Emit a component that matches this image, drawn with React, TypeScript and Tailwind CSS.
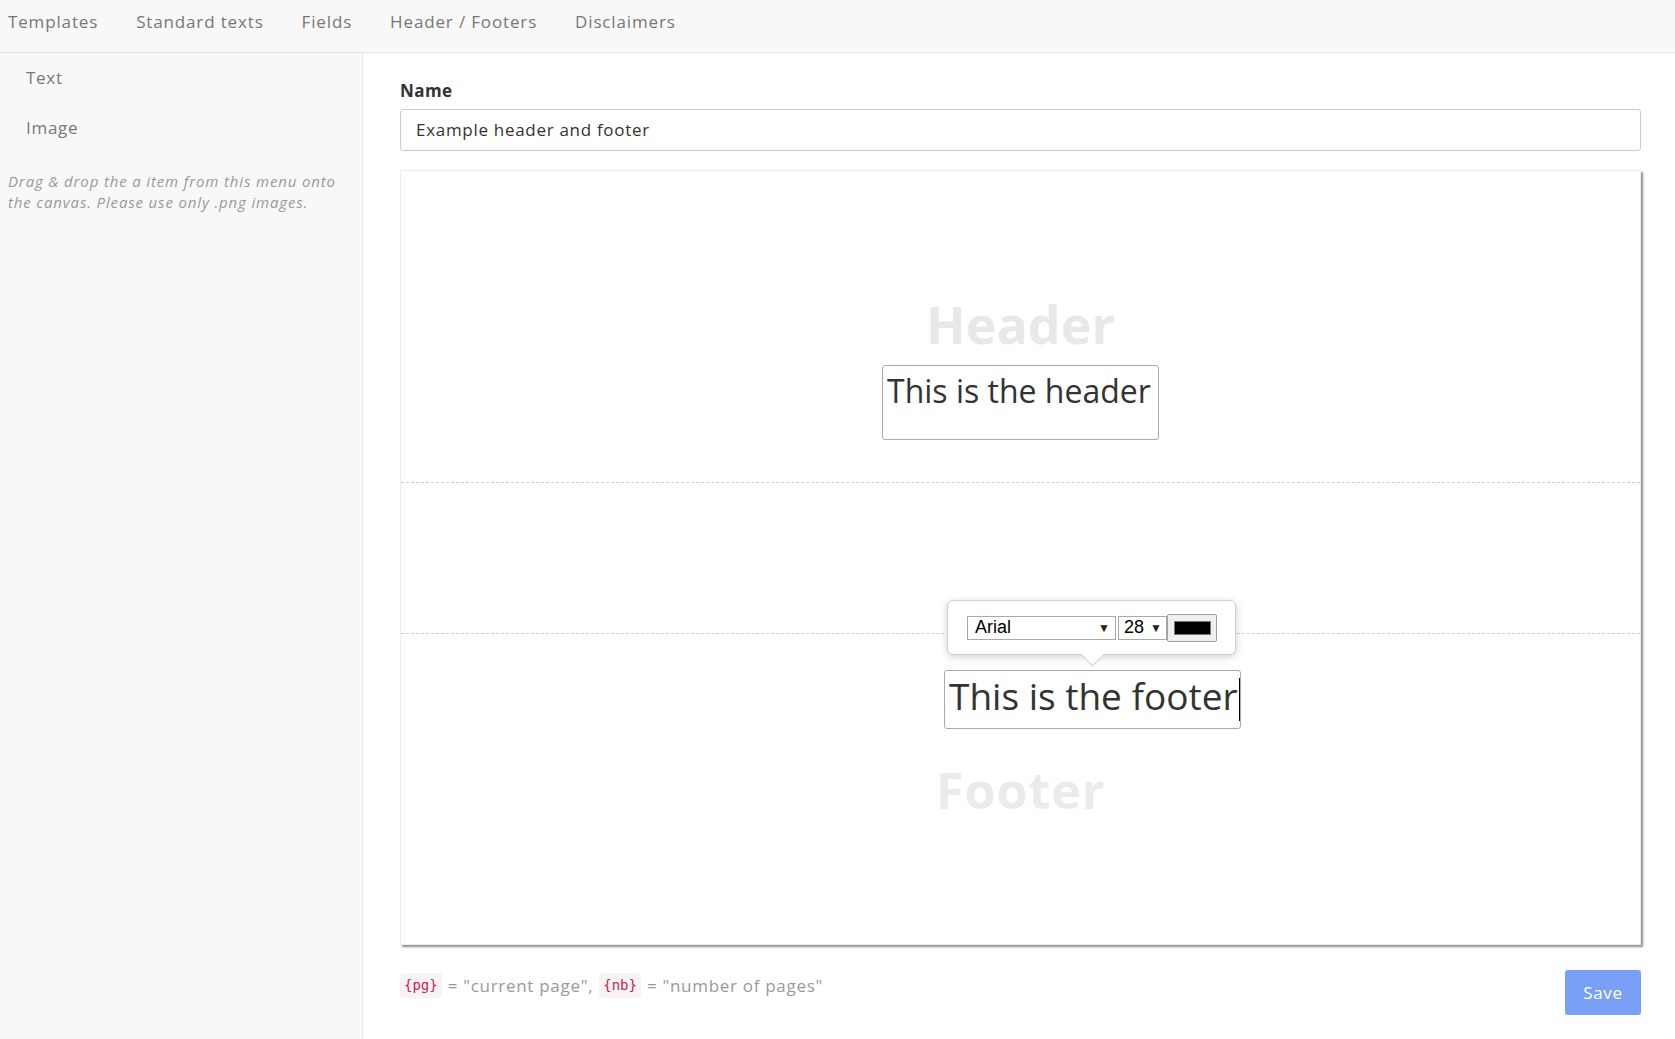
import React from "react";

const navItems = ["Templates", "Standard texts", "Fields", "Header / Footers", "Disclaimers"];

function Code({ children }: { children: React.ReactNode }) {
  return (
    <code className="rounded-[4px] bg-[#f9f2f4] px-[4px] py-[2px] text-[14px] tracking-normal text-[#c7254e] [font-family:'DejaVu_Sans_Mono',monospace]">
      {children}
    </code>
  );
}

function Caret() {
  return <span className="text-[12px] leading-none text-[#222]">▼</span>;
}

function Toolbar() {
  return (
    <div className="absolute left-[546px] top-[429px] flex h-[55px] w-[289px] items-center rounded-[6px] border border-[#cfcfcf] bg-white pl-[19px] shadow-[0_2px_8px_rgba(0,0,0,0.18)]">
      <div className="flex items-center tracking-normal [font-family:'Liberation_Sans',Arial,sans-serif]">
        <div className="flex h-[24px] w-[149px] items-center justify-between border border-[#a9a9a9] bg-white pl-[7px] pr-[5px] text-[18px] text-black">
          <span>Arial</span>
          <Caret />
        </div>
        <div className="ml-[2px] flex h-[24px] w-[49px] items-center justify-between border border-[#a9a9a9] bg-white pl-[5px] pr-[4px] text-[18px] text-black">
          <span>28</span>
          <Caret />
        </div>
        <div className="flex h-[28px] w-[50px] items-center justify-center rounded-[2px] border border-[#a0a0a0] bg-[#efefef]">
          <div className="h-[14px] w-[37px] border border-[#777] bg-black" />
        </div>
      </div>
      {/* arrow */}
      <div className="absolute left-[136px] top-[45px] h-[17px] w-[17px] rotate-45 border-b border-r border-[#cfcfcf] bg-white" />
    </div>
  );
}

function Canvas() {
  return (
    <div className="relative mt-[19px] flex h-[775px] flex-col border border-[#ececec] bg-white shadow-[2px_2px_2px_rgba(0,0,0,0.45)]">
      <div className="flex h-[312px] flex-col items-center border-b border-dashed border-[#cfcfcf] pt-[127px]">
        <span className="text-[52px] font-bold leading-none tracking-normal text-[#e8e8e8]">Header</span>
      </div>
      <div className="h-[151px] border-b border-dashed border-[#cfcfcf]" />
      <div className="flex flex-1 flex-col items-center pt-[130px]">
        <span className="text-[51px] font-bold leading-none tracking-[0.5px] text-[#ebebeb]">Footer</span>
      </div>

      <div className="absolute left-[481px] top-[194px] h-[75px] w-[277px] whitespace-nowrap rounded-[3px] border border-[#aaaaaa] bg-white px-[4px] pt-[1px] text-[32px] tracking-normal text-[#333]">
        This is the header
      </div>

      <Toolbar />

      <div className="absolute left-[543px] top-[499px] flex h-[59px] w-[297px] items-start overflow-hidden whitespace-nowrap rounded-[3px] border border-[#aaaaaa] bg-white pl-[4px] text-[37px] leading-[1.36] tracking-normal text-[#333]">
        <span>This is the footer</span>
        <span className="ml-[1px] mt-[7px] h-[43px] w-[1px] shrink-0 bg-black" />
      </div>
    </div>
  );
}

export default function App() {
  return (
    <div className="flex h-[1039px] flex-col bg-white tracking-[0.7px] text-[#333] [font-family:'Open_Sans',sans-serif]">
      <header className="flex h-[53px] shrink-0 items-center gap-[38px] border-b border-[#e6e6e6] bg-[#f8f8f8] pb-[8px] pl-[8px] text-[17px] tracking-[0.85px] text-[#777]">
        {navItems.map((item) => (
          <span key={item}>{item}</span>
        ))}
      </header>

      <div className="flex flex-1">
        <aside className="w-[363px] shrink-0 border-r border-[#e6e6e6] bg-[#f8f8f8]">
          <div className="pl-[26px] pt-[13px] text-[17px] text-[#777]">
            <div className="h-[24px] leading-[24px]">Text</div>
            <div className="mt-[26px] h-[24px] leading-[24px]">Image</div>
          </div>
          <p className="mt-[31px] whitespace-nowrap px-[8px] text-[15px] italic leading-[21px] tracking-[0.85px] text-[#999]">
            Drag &amp; drop the a item from this menu onto
            <br />
            the canvas. Please use only .png images.
          </p>
        </aside>

        <main className="flex flex-1 flex-col pl-[37px] pr-[34px] pt-[26px]">
          <label className="text-[17px] font-bold leading-[23px] tracking-[0.4px] text-[#333]">Name</label>
          <div className="mt-[7px] flex h-[42px] items-center rounded-[3px] border border-[#cccccc] bg-white pl-[15px] text-[17px] text-[#333]">
            Example header and footer
          </div>

          <Canvas />

          <div className="mt-[25px] flex items-start justify-between">
            <div className="mt-[3px] flex items-center gap-[6px] text-[17px] text-[#999]">
              <Code>{"{pg}"}</Code>
              <span>= "current page",</span>
              <Code>{"{nb}"}</Code>
              <span>= "number of pages"</span>
            </div>
            <button className="h-[45px] w-[76px] rounded-[3px] bg-[#79a0f6] text-[17px] text-white">Save</button>
          </div>
        </main>
      </div>
    </div>
  );
}
